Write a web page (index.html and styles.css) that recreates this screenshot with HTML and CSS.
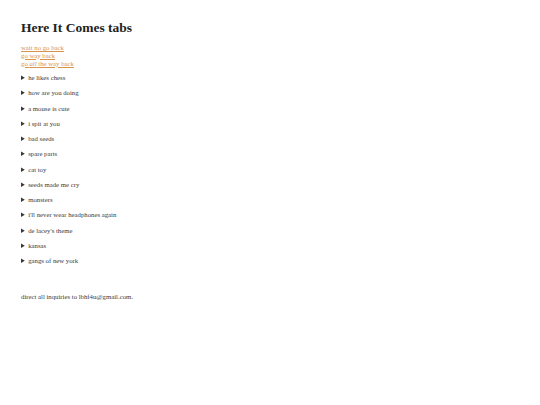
FILE: index.html
```html
<!DOCTYPE html>
<html lang="en">
<head>
    <meta charset="UTF-8">
    <meta name="viewport" content="width=device-width, initial-scale=1.0">
    <title>Here It Comes tabs</title>
    <link rel="stylesheet" href="styles.css">
</head>
<body>

    <h1>Here It Comes tabs</h1>

    <div class="nav-links">
        <a href="#">wait no go back</a>
        <a href="#">go way back</a>
        <a href="#">go <i>all</i> the way back</a>
    </div>

    <div class="tab-list">
        <details><summary>he likes chess</summary></details>
        <details><summary>how are you doing</summary></details>
        <details><summary>a mouse is cute</summary></details>
        <details><summary>i spit at you</summary></details>
        <details><summary>bad seeds</summary></details>
        <details><summary>spare parts</summary></details>
        <details><summary>cat toy</summary></details>
        <details><summary>seeds made me cry</summary></details>
        <details><summary>monsters</summary></details>
        <details><summary>i'll never wear headphones again</summary></details>
        <details><summary>de lacey's theme</summary></details>
        <details><summary>kansas</summary></details>
        <details><summary>gangs of new york</summary></details>
    </div>

    <p class="contact">direct all inquiries to lbhf4u@gmail.com.</p>

</body>
</html>
```

FILE: styles.css
```css
body {
    font-family: "Liberation Serif", "Times New Roman", serif;
    font-size: 6.75px;
    line-height: 7.75px;
    color: #3a3a3a;
    margin: 0;
    padding: 20px 21px;
}
h1 {
    font-size: 13.5px;
    line-height: 15.5px;
    margin: 0 0 8.5px;
    color: #222;
}
.nav-links a {
    display: block;
    color: #d9934d;
    text-decoration-thickness: 0.5px;
}
.tab-list {
    margin-top: 6.8px;
}
.tab-list details {
    margin-bottom: 7.5px;
}
.tab-list summary {
    cursor: pointer;
}
.contact {
    margin: 27.8px 0 0;
}
```
